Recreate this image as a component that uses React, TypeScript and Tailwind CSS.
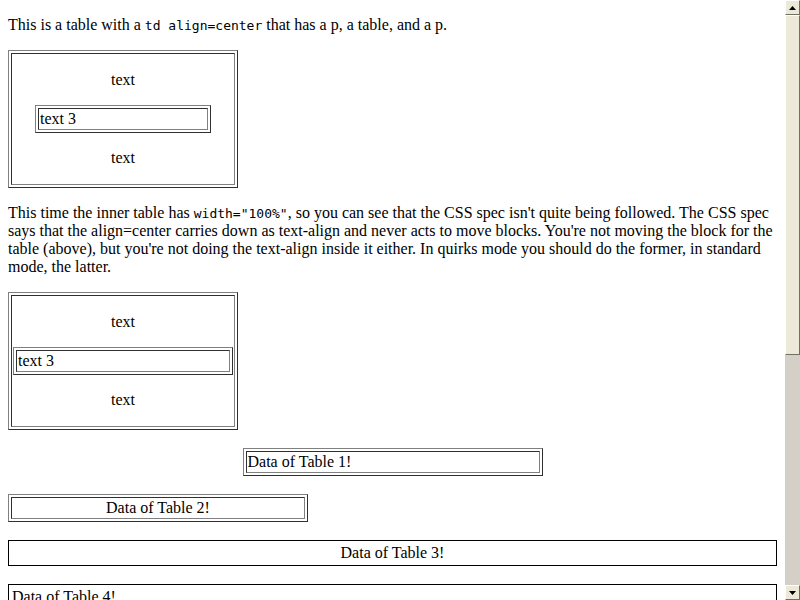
const outset =
  'border border-t-[#808080] border-l-[#808080] border-r-[#303030] border-b-[#303030] p-[2px]';
const inset =
  'border border-t-[#303030] border-l-[#303030] border-r-[#808080] border-b-[#808080] p-[1px]';

function Code({ children }: { children: React.ReactNode }) {
  return (
    <code className="font-['DejaVu_Sans_Mono',monospace] text-[13px] leading-none">
      {children}
    </code>
  );
}

function BevelTable({
  className,
  cellClassName,
  children,
}: {
  className?: string;
  cellClassName?: string;
  children: React.ReactNode;
}) {
  return (
    <div className={`${outset} ${className ?? ''}`}>
      <div className={`${inset} ${cellClassName ?? ''}`}>{children}</div>
    </div>
  );
}

function NestedCase({ innerClass }: { innerClass: string }) {
  return (
    <BevelTable className="mt-4 w-[230px]">
      <div className="flex flex-col">
        <p className="mt-4 text-center">text</p>
        <BevelTable className={`mt-4 ${innerClass}`}>text 3</BevelTable>
        <p className="my-4 text-center">text</p>
      </div>
    </BevelTable>
  );
}

function ScrollButton({ down }: { down?: boolean }) {
  return (
    <div className="flex h-[15px] items-center justify-center border border-t-[#ffffff] border-l-[#ffffff] border-r-[#716f64] border-b-[#716f64] bg-[#ece9d8]">
      <svg width="7" height="4" viewBox="0 0 7 4">
        <path d={down ? 'M0 0h7L3.5 4z' : 'M0 4h7L3.5 0z'} fill="#000" />
      </svg>
    </div>
  );
}

export default function App() {
  return (
    <div className="flex h-[600px] w-[800px] overflow-hidden bg-white font-['Liberation_Serif',serif] text-[16px] leading-[18px] text-black">
      <div className="flex w-[785px] shrink-0 flex-col px-2">
        <p className="mt-4 h-[18px]">
          This is a table with a <Code>td align=center</Code> that has a p, a
          table, and a p.
        </p>

        <NestedCase innerClass="mx-auto w-[176px]" />

        <p className="mt-4 h-[72px]">
          This time the inner table has <Code>width="100%"</Code>, so you can
          see that the CSS spec isn't quite being followed. The CSS spec says
          that the align=center carries down as text-align and never acts to
          move blocks. You're not moving the block for the table (above), but
          you're not doing the text-align inside it either. In quirks mode you
          should do the former, in standard mode, the latter.
        </p>

        <NestedCase innerClass="w-full" />

        <BevelTable className="mx-auto mt-[18px] w-[300px]">
          Data of Table 1!
        </BevelTable>
        <BevelTable className="mt-[18px] w-[300px]" cellClassName="text-center">
          Data of Table 2!
        </BevelTable>

        <div className="mt-[18px] border border-black p-[2px]">
          <div className="p-[1px] text-center">Data of Table 3!</div>
        </div>
        <div className="mt-[18px] shrink-0 border border-black p-[2px]">
          <div className="p-[1px]">Data of Table 4!</div>
        </div>
      </div>

      <div className="flex w-[15px] shrink-0 flex-col bg-[#d4d0c8]">
        <ScrollButton />
        <div className="h-[340px] border border-t-[#ffffff] border-l-[#ffffff] border-r-[#716f64] border-b-[#716f64] bg-[#ece9d8]" />
        <div className="flex-1" />
        <ScrollButton down />
      </div>
    </div>
  );
}
